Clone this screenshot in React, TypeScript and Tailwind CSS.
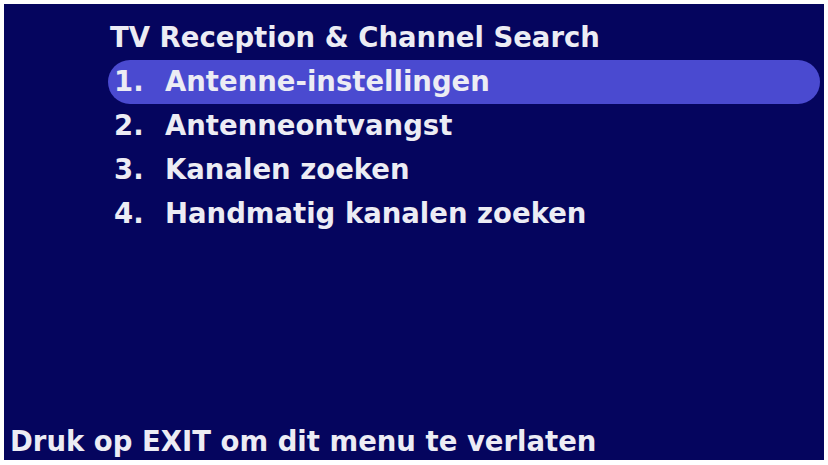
import React from "react";

const items = [
  ["1.", "Antenne-instellingen"],
  ["2.", "Antenneontvangst"],
  ["3.", "Kanalen zoeken"],
  ["4.", "Handmatig kanalen zoeken"],
];

export default function App() {
  return (
    <div className="w-[828px] h-[465px] bg-white pt-[4px] pl-[4px] pr-[4px] pb-[5px]">
      <div
        className="h-full bg-[#05055e] flex flex-col text-[#ececf4] font-bold"
        style={{ fontFamily: '"DejaVu Sans", sans-serif' }}
      >
        <div className="pl-[106px] pt-[18px] text-[27.5px] leading-[30px]">TV Reception &amp; Channel Search</div>
        <div className="flex flex-col pl-[104px] pr-[4px] mt-[8px]">
          {items.map(([n, t], i) => (
            <div
              key={t}
              className={
                "h-[44px] flex items-center pl-[6px] rounded-full text-[27.5px] " +
                (i === 0 ? "bg-[#4a4ad0]" : "")
              }
            >
              <span className="w-[51px] shrink-0">{n}</span>
              <span>{t}</span>
            </div>
          ))}
        </div>
        <div className="mt-auto pl-[6px] pb-[4px] text-[27.5px] leading-[30px]">Druk op EXIT om dit menu te verlaten</div>
      </div>
    </div>
  );
}
